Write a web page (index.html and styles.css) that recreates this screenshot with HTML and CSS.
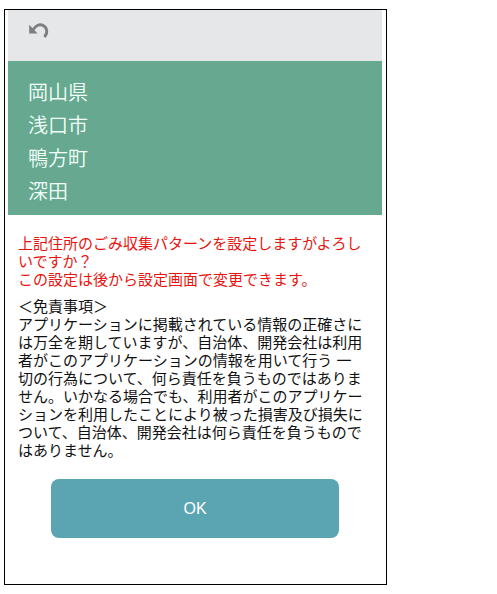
FILE: index.html
```html
<!DOCTYPE html>
<html lang="ja">
<head>
<meta charset="utf-8">
<meta name="viewport" content="width=device-width, initial-scale=1">
<title>住所の確認</title>
<link rel="stylesheet" href="styles.css">
</head>
<body>
<main class="screen">
  <header class="toolbar">
    <button class="back" type="button" aria-label="戻る">
      <svg viewBox="0 0 22 20" aria-hidden="true">
        <path class="arc" d="M5.2 8.6C7.6 4.4 11.8 2.7 15.2 4.5C19.4 6.8 20 12.2 16.4 16"/>
        <path class="head" d="M1.2 3.8L1.2 12.4L9.6 12.4Z"/>
      </svg>
    </button>
  </header>
  <address class="place">
    <span>岡山県</span>
    <span>浅口市</span>
    <span>鴨方町</span>
    <span>深田</span>
  </address>
  <section class="content">
    <p class="notice">上記住所のごみ収集パターンを設定しますがよろしいですか？<br>この設定は後から設定画面で変更できます。</p>
    <h1 class="terms-title">＜免責事項＞</h1>
    <p class="terms">アプリケーションに掲載されている情報の正確さには万全を期していますが、自治体、開発会社は利用者がこのアプリケーションの情報を用いて行う 一切の行為について、何ら責任を負うものではありません。いかなる場合でも、利用者がこのアプリケーションを利用したことにより被った損害及び損失について、自治体、開発会社は何ら責任を負うものではありません。</p>
  </section>
  <footer class="actions">
    <button class="ok" type="button">OK</button>
  </footer>
</main>
</body>
</html>
```
FILE: styles.css
```css
* {
  box-sizing: border-box;
}

body {
  margin: 0;
  padding: 9px 4px;
  background: #fff;
  color: #111;
  font-family: "Liberation Sans", "Noto Sans CJK JP", sans-serif;
  font-size: 15px;
  line-height: 18px;
}

.screen {
  max-width: 383px;
  padding: 0 4px 0 3px;
  border: 1px solid #000;
}

.toolbar {
  display: flex;
  align-items: flex-start;
  padding: 11px 20px;
  background: #e6e7e9;
}

.back {
  display: block;
  padding: 0;
  border: 0;
  background: none;
  color: #7d7e80;
}

.back svg {
  display: block;
  width: 22px;
  height: 20px;
  margin-bottom: 9px;
}

.arc {
  fill: none;
  stroke: currentColor;
  stroke-width: 2.8;
}

.head {
  fill: currentColor;
}

.place {
  display: grid;
  padding: 14px 20px 8px;
  background: #66a990;
  color: #f2fff9;
  font-family: "Noto Sans CJK JP", sans-serif;
  font-size: 20px;
  font-style: normal;
  font-weight: 350;
  line-height: 33px;
}

.content {
  padding: 20px 18px 0 10px;
}

.notice,
.terms-title,
.terms {
  margin: 0;
  font-size: 15px;
  font-weight: 400;
}

.notice {
  margin-bottom: 9px;
  color: #e6150f;
}

.actions {
  padding: 19px 43px 46px;
}

.ok {
  display: block;
  width: 100%;
  padding: 20px;
  border: 0;
  border-radius: 8px;
  background: #5ba5b3;
  color: #fff;
  font: 16px/19px "Liberation Sans", sans-serif;
}
```
